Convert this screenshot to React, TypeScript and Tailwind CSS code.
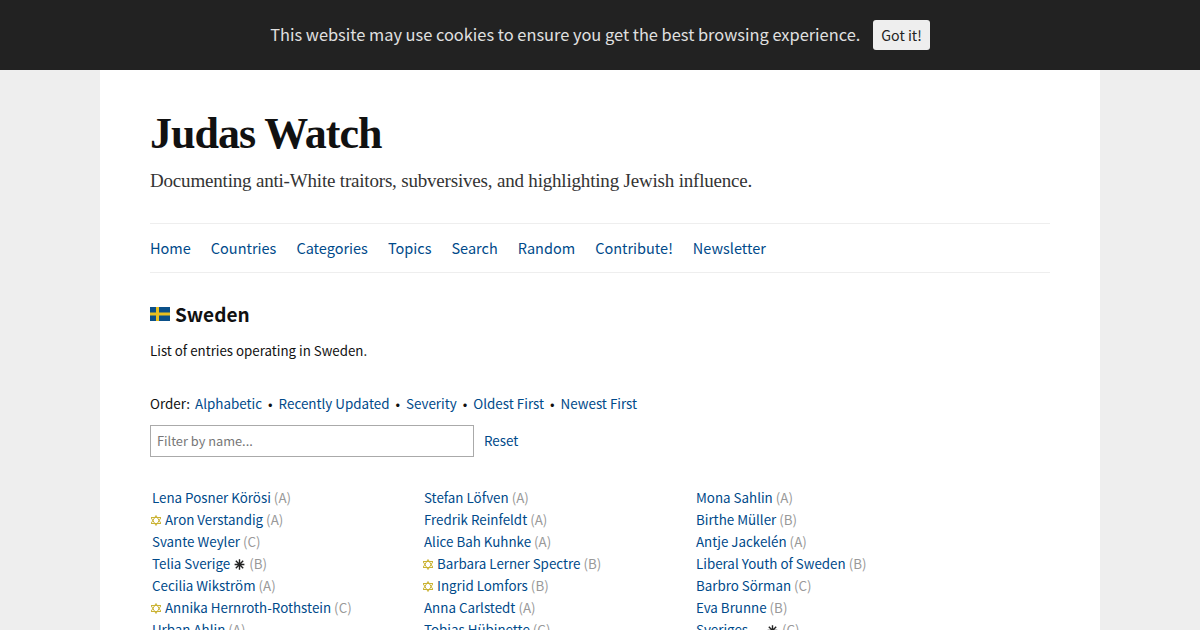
const sans = "font-['Noto_Sans_CJK_JP','Source_Sans_Pro',sans-serif]";

function Star() {
  return (
    <svg width="10" height="11" viewBox="0 0 10 11" className="-ml-[1px] mr-[4px] inline-block align-[-1px]" fill="none" stroke="#cbb334" strokeWidth="1">
      <path d="M5 0.5 L10 8.5 L0 8.5 Z" />
      <path d="M5 10.5 L10 2.5 L0 2.5 Z" />
    </svg>
  );
}

function Ast() {
  return (
    <svg width="11" height="11" viewBox="0 0 11 11" className="mx-[1px] inline-block align-[-1px]" stroke="#222" strokeWidth="1.4">
      <path d="M5.5 0.3V10.7M0.6 5.5H10.4M1.8 1.8L9.2 9.2M9.2 1.8L1.8 9.2" />
    </svg>
  );
}

type E = { n: string; g: string; s?: boolean; a?: boolean; gap?: boolean };

const col1: E[] = [
  { n: "Lena Posner Körösi", g: "A" },
  { n: "Aron Verstandig", g: "A", s: true },
  { n: "Svante Weyler", g: "C" },
  { n: "Telia Sverige", g: "B", a: true },
  { n: "Cecilia Wikström", g: "A" },
  { n: "Annika Hernroth-Rothstein", g: "C", s: true },
  { n: "Urban Ahlin", g: "A" },
];
const col2: E[] = [
  { n: "Stefan Löfven", g: "A" },
  { n: "Fredrik Reinfeldt", g: "A" },
  { n: "Alice Bah Kuhnke", g: "A" },
  { n: "Barbara Lerner Spectre", g: "B", s: true },
  { n: "Ingrid Lomfors", g: "B", s: true },
  { n: "Anna Carlstedt", g: "A" },
  { n: "Tobias Hübinette", g: "C" },
];
const col3: E[] = [
  { n: "Mona Sahlin", g: "A" },
  { n: "Birthe Müller", g: "B" },
  { n: "Antje Jackelén", g: "A" },
  { n: "Liberal Youth of Sweden", g: "B" },
  { n: "Barbro Sörman", g: "C" },
  { n: "Eva Brunne", g: "B" },
  { n: "Sveriges", g: "C", a: true, gap: true },
];

function Col({ items }: { items: E[] }) {
  return (
    <ul className="w-[272px] shrink-0">
      {items.map((e) => (
        <li key={e.n} className="h-[22px] pl-[2px] text-[13.35px] leading-[22px] whitespace-nowrap">
          {e.s && <Star />}
          <a className={`text-[#004a8a] ${e.gap ? "mr-[15px]" : ""}`}>{e.n}</a>
          {e.a && <>{" "}<Ast /></>}{" "}
          <span className="text-[#999]">({e.g})</span>
        </li>
      ))}
    </ul>
  );
}

export default function App() {
  return (
    <div className={`h-[630px] overflow-hidden bg-[#eeeeee] text-[#111] ${sans}`}>
      <div className="flex h-[70px] items-center justify-center gap-[13px] bg-[#222222]">
        <span className="mb-[1px] text-[16.4px] text-[#e0e0e0]">This website may use cookies to ensure you get the best browsing experience.</span>
        <button className="h-[30px] rounded-[3px] bg-[#eeeeee] px-[8px] pt-[1px] text-[14.2px] text-[#222]">Got it!</button>
      </div>
      <div className="mx-auto w-[1000px] bg-white px-[50px] pb-10 pt-[35px]">
        <h1 className="font-['Liberation_Serif',serif] text-[44px] font-bold leading-[58px] tracking-[-1px] text-[#111]">Judas Watch</h1>
        <p className="mt-[4px] font-['Liberation_Serif',serif] text-[19px] leading-[28px] tracking-[-0.19px] text-[#333]">Documenting anti-White traitors, subversives, and highlighting Jewish influence.</p>
        <nav className="mt-[28px] flex h-[50px] items-center gap-[20px] border-y border-[#eeeeee] text-[14.5px] text-[#004a8a]">
          {["Home", "Countries", "Categories", "Topics", "Search", "Random", "Contribute!", "Newsletter"].map((t) => (
            <a key={t}>{t}</a>
          ))}
        </nav>
        <h2 className="mt-[26px] flex h-[30px] items-center gap-[5px] text-[19px] font-bold">
          <svg width="20" height="14" viewBox="0 0 20 14"><rect width="20" height="14" fill="#0b5089" /><rect x="6" width="3" height="14" fill="#e8c020" /><rect y="5.5" width="20" height="3" fill="#e8c020" /></svg>
          Sweden
        </h2>
        <p className="mt-[11px] text-[13.3px] leading-[22px]">List of entries operating in Sweden.</p>
        <div className="mt-[30px] flex h-[22px] items-center text-[13.4px] leading-[22px]">
          <span className="mr-[5px]">Order:</span>
          <a className="text-[#004a8a]">Alphabetic</a>
          <span className="mx-[6px]">•</span>
          <a className="text-[#004a8a]">Recently Updated</a>
          <span className="mx-[6px]">•</span>
          <a className="text-[#004a8a]">Severity</a>
          <span className="mx-[6px]">•</span>
          <a className="text-[#004a8a]">Oldest First</a>
          <span className="mx-[6px]">•</span>
          <a className="text-[#004a8a]">Newest First</a>
        </div>
        <div className="mt-[11px] flex items-center gap-[10px]">
          <input placeholder="Filter by name..." className="h-[32px] w-[324px] border border-[#aaaaaa] px-[6px] pb-[2px] text-[12.8px] placeholder:text-[#777] outline-none" />
          <a className="mb-[2px] text-[13.4px] text-[#004a8a]">Reset</a>
        </div>
        <div className="mt-[30px] flex">
          <Col items={col1} />
          <Col items={col2} />
          <Col items={col3} />
        </div>
      </div>
    </div>
  );
}
